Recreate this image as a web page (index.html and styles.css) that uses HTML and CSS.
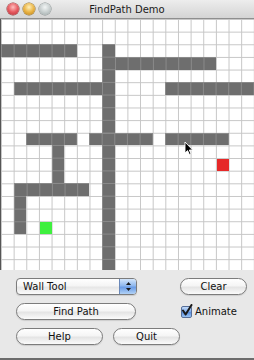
FILE: index.html
```html
<!DOCTYPE html>
<html>
<head>
<meta charset="utf-8">
<title>FindPath Demo</title>
<link rel="stylesheet" href="styles.css">
</head>
<body>
<div class="window">
  <div class="titlebar">
    <div class="lights">
      <span class="light red"></span>
      <span class="light yellow"></span>
      <span class="light gray"></span>
    </div>
    <div class="title">FindPath Demo</div>
    <div></div>
  </div>
  <div class="board">
    <div class="grid">
      <div class="wall w1"></div>
      <div class="wall w2"></div>
      <div class="wall w3"></div>
      <div class="wall w4"></div>
      <div class="wall w5"></div>
      <div class="wall w6"></div>
      <div class="wall w7"></div>
      <div class="wall w8"></div>
      <div class="wall w9"></div>
      <div class="wall w10"></div>
      <div class="wall w11"></div>
      <div class="start"></div>
      <div class="goal"></div>
    </div>
    <svg class="cursor" width="10" height="15" viewBox="0 0 10 15">
      <path d="M1 1 L1 12 L3.6 9.6 L5.4 13.6 L7 12.9 L5.3 9 L8.7 9 Z" fill="#000" stroke="#fff" stroke-width="0.9" stroke-linejoin="round"/>
    </svg>
  </div>
  <div class="panel">
    <div class="popup">
      <span class="popup-label">Wall Tool</span>
      <span class="stepper">
        <svg width="7" height="11" viewBox="0 0 7 11">
          <path d="M3.5 1 L6 4 L1 4 Z" fill="#1a1a1a"/>
          <path d="M3.5 10 L6 7 L1 7 Z" fill="#1a1a1a"/>
        </svg>
      </span>
    </div>
    <button class="btn clear">Clear</button>
    <button class="btn findpath">Find Path</button>
    <label class="check">
      <span class="box">
        <svg class="tick" width="12" height="13" viewBox="0 0 12 13">
          <path d="M2 6.5 L4.6 10.5 L10.5 1" fill="none" stroke="#1a1a1a" stroke-width="2" stroke-linecap="round" stroke-linejoin="round"/>
        </svg>
      </span>
      <span>Animate</span>
    </label>
    <button class="btn help">Help</button>
    <button class="btn quit">Quit</button>
  </div>
</div>
</body>
</html>
```

FILE: styles.css
```css
* { box-sizing: border-box; }

body {
  margin: 0;
  background: #ffffff;
  font-family: "DejaVu Sans", "Liberation Sans", sans-serif;
}

.window {
  width: 254px;
  height: 360px;
  overflow: hidden;
  background: #e8e8e8;
  display: flex;
  flex-direction: column;
}

.titlebar {
  height: 19px;
  flex: none;
  display: grid;
  grid-template-columns: 1fr auto 1fr;
  align-items: center;
  background: linear-gradient(#ededed, #d4d4d4);
  border-bottom: 1px solid #8e8e8e;
}

.lights {
  display: flex;
  gap: 4px;
  padding-left: 7px;
}

.light {
  width: 12px;
  height: 12px;
  border-radius: 50%;
}

.red {
  background: radial-gradient(circle at 50% 35%, #ffc0c0, #e65a60 50%, #b03038);
  box-shadow: 0 0 0 0.5px #8a3a3a;
}

.yellow {
  background: radial-gradient(circle at 50% 35%, #fff0b8, #eab445 50%, #b57c18);
  box-shadow: 0 0 0 0.5px #8a6a2a;
}

.gray {
  background: radial-gradient(circle at 50% 35%, #f2f5f5, #c8cfcf 50%, #9ca6a6);
  box-shadow: 0 0 0 0.5px #808888;
}

.title {
  font-size: 10px;
  color: #1a1a1a;
}

.board {
  position: relative;
  height: 251px;
  flex: none;
  overflow: hidden;
  border-left: 1px solid #555555;
  background: #ffffff;
}

.grid {
  display: grid;
  grid-template-columns: repeat(20, 12.65px);
  grid-template-rows: repeat(20, 12.65px);
  background-color: #ffffff;
  background-image:
    linear-gradient(to right, #c6c6c6 1px, transparent 1px),
    linear-gradient(to bottom, #c6c6c6 1px, transparent 1px);
  background-size: 12.65px 12.65px;
}

.wall {
  background-color: #6e6e6e;
  background-image:
    linear-gradient(to right, #8a8a8a 1px, transparent 1px),
    linear-gradient(to bottom, #8a8a8a 1px, transparent 1px);
  background-size: 12.65px 12.65px;
}

.w1  { grid-area: 3 / 1 / 4 / 7; }
.w2  { grid-area: 3 / 9 / 21 / 10; }
.w3  { grid-area: 4 / 10 / 5 / 18; }
.w4  { grid-area: 6 / 2 / 7 / 9; }
.w5  { grid-area: 6 / 14 / 7 / 21; }
.w6  { grid-area: 10 / 3 / 11 / 7; }
.w7  { grid-area: 10 / 8 / 11 / 13; }
.w8  { grid-area: 10 / 14 / 11 / 19; }
.w9  { grid-area: 11 / 5 / 14 / 6; }
.w10 { grid-area: 14 / 2 / 15 / 8; }
.w11 { grid-area: 15 / 2 / 18 / 3; }

.start {
  grid-area: 17 / 4 / 18 / 5;
  background: #3ff03f;
  margin: 1px 0 0 1px;
}

.goal {
  grid-area: 12 / 18 / 13 / 19;
  background: #e62828;
  margin: 1px 0 0 1px;
}

.cursor {
  position: absolute;
  left: 183px;
  top: 122px;
}

.panel {
  flex: 1;
  display: grid;
  grid-template-columns: 87px 10px 24px 43px 67px;
  grid-template-rows: repeat(3, 17px);
  row-gap: 8px;
  padding: 8px 0 0 16px;
  border-bottom: 2px solid #6c6c6c;
}

.btn {
  font-family: "DejaVu Sans", "Liberation Sans", sans-serif;
  font-size: 10px;
  color: #111111;
  height: 17px;
  padding: 0;
  border: 1px solid #7c7c7c;
  border-radius: 9px;
  background: linear-gradient(#ffffff, #f5f5f5 45%, #e4e4e4 55%, #fbfbfb);
  box-shadow: 0 1px 1px rgba(0, 0, 0, 0.12);
}

.popup {
  grid-column: 1 / 4;
  grid-row: 1;
  display: flex;
  border: 1px solid #7c7c7c;
  border-radius: 4px;
  overflow: hidden;
  background: linear-gradient(#ffffff, #f5f5f5 45%, #e6e6e6 55%, #fbfbfb);
  box-shadow: 0 1px 1px rgba(0, 0, 0, 0.12);
}

.popup-label {
  flex: 1;
  font-size: 10px;
  line-height: 15px;
  padding-left: 6px;
  color: #111111;
}

.stepper {
  width: 17px;
  display: flex;
  align-items: center;
  justify-content: center;
  border-left: 1px solid #6a88b8;
  background: linear-gradient(#d4e6fb, #8fb8ee 45%, #6a9ce6 55%, #b2d2f6);
}

.clear {
  grid-column: 5;
  grid-row: 1;
}

.findpath {
  grid-column: 1 / 4;
  grid-row: 2;
  margin-right: 1px;
}

.check {
  grid-column: 5;
  grid-row: 2;
  display: flex;
  align-items: center;
  gap: 3px;
  padding-left: 1px;
  font-size: 10px;
  color: #111111;
}

.box {
  position: relative;
  width: 11px;
  height: 12px;
  border: 1px solid #566e98;
  border-radius: 2px;
  background: linear-gradient(#c4dcfa, #7eaaea 45%, #5a8ede 55%, #9ac4f4);
}

.tick {
  position: absolute;
  left: -1px;
  top: -3px;
}

.help {
  grid-column: 1;
  grid-row: 3;
}

.quit {
  grid-column: 3 / 5;
  grid-row: 3;
}
```
